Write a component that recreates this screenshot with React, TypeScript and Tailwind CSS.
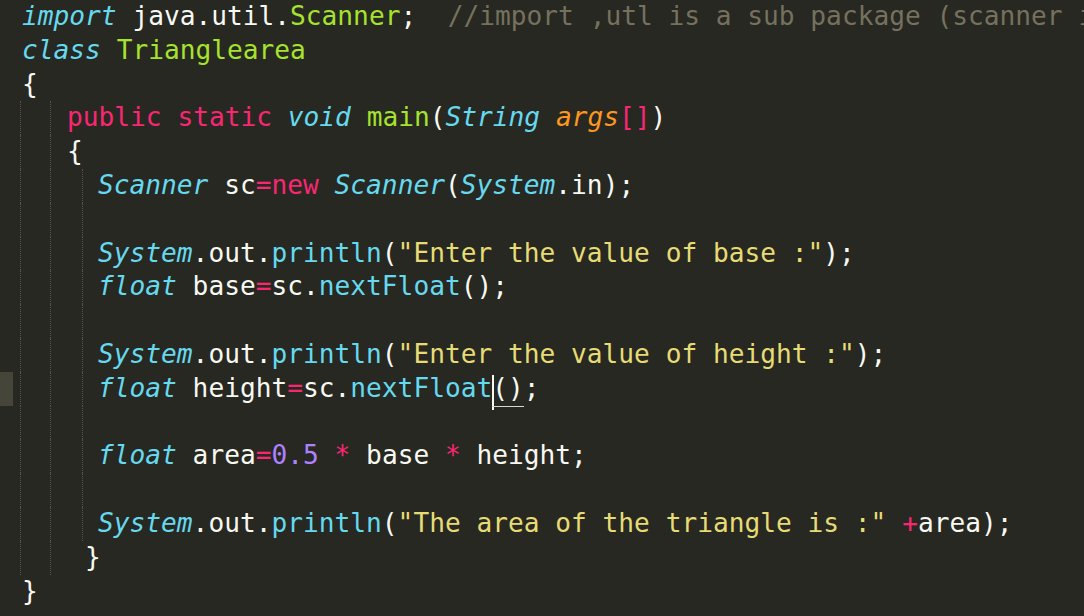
type Tok = [string, string?];

const W = "text-[#f8f8f2]";
const KW = "text-[#f92672]";
const TY = "text-[#66d9ef] italic";
const FN = "text-[#66d9ef]";
const CL = "text-[#a6e22e]";
const AR = "text-[#fd971f] italic";
const ST = "text-[#e6db74]";
const NU = "text-[#ae81ff]";
const CM = "text-[#75715e]";

type Line = {
  indent: string;
  toks: Tok[];
  guides: number[];
  current?: boolean;
};

const lines: Line[] = [
  {
    indent: "pl-[9px]",
    guides: [],
    toks: [
      ["import", TY],
      [" java.util."],
      ["Scanner", CL],
      [";"],
      ["  //import ,utl is a sub package (scanner is a class)", CM],
    ],
  },
  { indent: "pl-[9px]", guides: [], toks: [["class", TY], [" "], ["Trianglearea", CL]] },
  { indent: "pl-[9px]", guides: [], toks: [["{"]] },
  {
    indent: "pl-[54px]",
    guides: [20, 50],
    toks: [
      ["public", KW],
      [" "],
      ["static", KW],
      [" "],
      ["void", TY],
      [" "],
      ["main", CL],
      ["("],
      ["String", TY],
      [" "],
      ["args", AR],
      ["[]", KW],
      [")"],
    ],
  },
  { indent: "pl-[54px]", guides: [20, 50], toks: [["{"]] },
  {
    indent: "pl-[85px]",
    guides: [20, 50, 82],
    toks: [
      ["Scanner", TY],
      [" sc"],
      ["=", KW],
      ["new", KW],
      [" "],
      ["Scanner", TY],
      ["("],
      ["System", TY],
      [".in);"],
    ],
  },
  { indent: "pl-[85px]", guides: [20, 50, 82], toks: [] },
  {
    indent: "pl-[85px]",
    guides: [20, 50, 82],
    toks: [
      ["System", TY],
      [".out."],
      ["println", FN],
      ["("],
      ['"Enter the value of base :"', ST],
      [");"],
    ],
  },
  {
    indent: "pl-[85px]",
    guides: [20, 50, 82],
    toks: [["float", TY], [" base"], ["=", KW], ["sc."], ["nextFloat", FN], ["();"]],
  },
  { indent: "pl-[85px]", guides: [20, 50, 82], toks: [] },
  {
    indent: "pl-[85px]",
    guides: [20, 50, 82],
    toks: [
      ["System", TY],
      [".out."],
      ["println", FN],
      ["("],
      ['"Enter the value of height :"', ST],
      [");"],
    ],
  },
  {
    indent: "pl-[85px]",
    guides: [20, 50, 82],
    current: true,
    toks: [["float", TY], [" height"], ["=", KW], ["sc."], ["nextFloat", FN], ["()", "cursor"], [";"]],
  },
  { indent: "pl-[85px]", guides: [20, 50, 82], toks: [] },
  {
    indent: "pl-[85px]",
    guides: [20, 50, 82],
    toks: [
      ["float", TY],
      [" area"],
      ["=", KW],
      ["0.5", NU],
      [" "],
      ["*", KW],
      [" base "],
      ["*", KW],
      [" height;"],
    ],
  },
  { indent: "pl-[85px]", guides: [20, 50, 82], toks: [] },
  {
    indent: "pl-[85px]",
    guides: [20, 50, 82],
    toks: [
      ["System", TY],
      [".out."],
      ["println", FN],
      ["("],
      ['"The area of the triangle is :"', ST],
      [" "],
      ["+", KW],
      ["area);"],
    ],
  },
  { indent: "pl-[72px]", guides: [20, 50], toks: [["}"]] },
  { indent: "pl-[9px]", guides: [], toks: [["}"]] },
];

const guideLeft: Record<number, string> = {
  20: "left-[20px]",
  50: "left-[50px]",
  82: "left-[82px]",
};

function Token({ tok }: { tok: Tok }) {
  const [text, cls] = tok;
  if (cls === "cursor") {
    return (
      <span className={`relative ${W}`}>
        <span className="absolute left-0 top-[2px] h-[35px] w-[2px] bg-[#f8f8f0]" />
        <span className="absolute bottom-[-4px] left-0 right-0 h-px bg-[#d8d8d0]" />
        {text}
      </span>
    );
  }
  return <span className={cls ?? W}>{text}</span>;
}

export default function App() {
  return (
    <div className="h-[616px] w-full overflow-hidden bg-[#272822] font-['DejaVu_Sans_Mono','Liberation_Mono',monospace] text-[26.2px] leading-[33.8px]">
      {lines.map((line, i) => (
        <div key={i} className="relative flex h-[33.8px] whitespace-pre">
          {line.guides.map((g) => (
            <div
              key={g}
              className={`absolute top-0 bottom-0 w-0 border-l border-dotted border-[#55554b] ${guideLeft[g]}`}
            />
          ))}
          <div className={`w-[13px] shrink-0 ${line.current ? "bg-[#46453a]" : ""}`} />
          <div className={`${line.indent} ${W}`}>
            {line.toks.map((t, j) => (
              <Token key={j} tok={t} />
            ))}
          </div>
        </div>
      ))}
    </div>
  );
}
